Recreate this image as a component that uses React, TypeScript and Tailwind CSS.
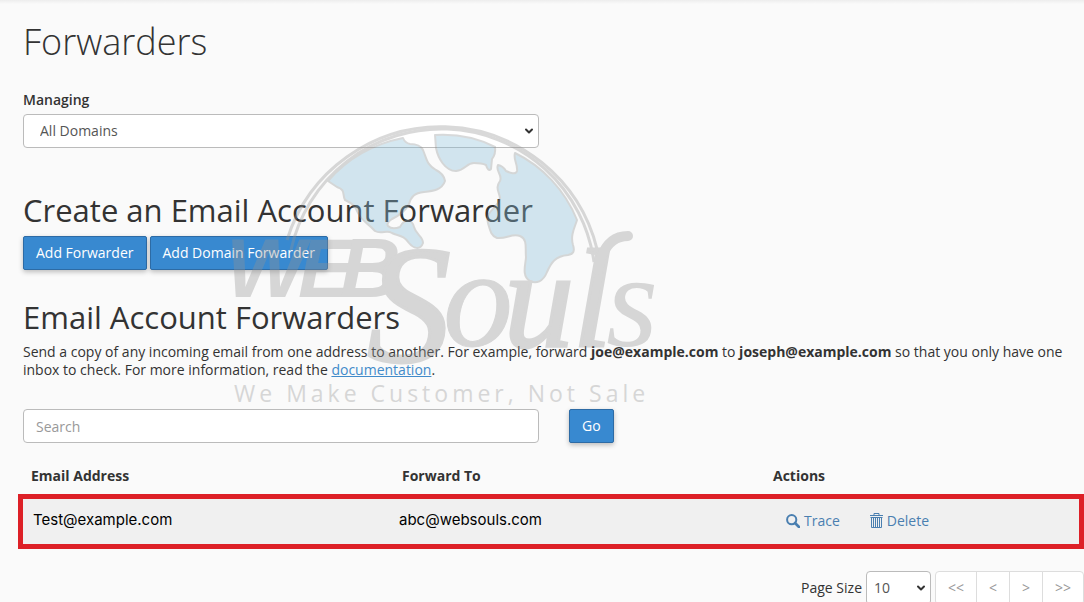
import { ChevronDown } from "lucide-react";

const forwarders = [{ email: "Test@example.com", forwardTo: "abc@websouls.com" }];

const pages = [
  { label: "<<", title: "First page", width: "w-[42px]" },
  { label: "<", title: "Previous page", width: "w-[34px]" },
  { label: ">", title: "Next page", width: "w-[34px]" },
  { label: ">>", title: "Last page", width: "w-[42px]" },
];

const primaryButton =
  "h-[34px] rounded-xs border border-[#2d6ba5] bg-[#3889d0] px-3 text-sm text-white shadow-[0_2px_5px_rgba(0,0,0,0.25)] hover:bg-[#2f79ba]";

function SearchIcon() {
  return (
    <svg viewBox="0 0 14 14" className="h-3.5 w-3.5" fill="none" stroke="currentColor">
      <circle cx="5.7" cy="5.7" r="4.6" strokeWidth="2" />
      <path d="M9 9l4 4" strokeWidth="2.6" strokeLinecap="round" />
    </svg>
  );
}

function TrashIcon() {
  return (
    <svg viewBox="0 0 13 15" className="h-[15px] w-[13px]" fill="none" stroke="currentColor">
      <path d="M0 2.5h13M4 2.5v-2h5v2M0.5 4.5h12" />
      <path d="M1.5 5v9.5h10V5M3.5 5v9M5.5 5v9M7.5 5v9M9.5 5v9" />
    </svg>
  );
}

function Watermark() {
  return (
    <svg
      viewBox="200 100 480 320"
      className="pointer-events-none absolute left-[200px] top-[100px] h-[320px] w-[480px] opacity-35"
      aria-hidden="true"
    >
      <g fill="none" stroke="#949494" strokeWidth="3">
        <path d="M287 240A161 161 0 0 1 597 249" />
        <path d="M291 250A154 154 0 0 1 594 262" />
      </g>
      <g fill="#88bed8" stroke="#8f9496" strokeWidth="2" strokeLinejoin="round">
        <path d="M328 181C347 159 373 144 403 138Q405 143 410 144Q420 144 423 150C427 160 427 165 436 170Q444 174 445 181C442 190 433 191 424 192C414 193 411 197 409 204C405 212 398 216 392 219Q386 223 388 226Q392 230 400 227C405 218 412 219 414 227C416 235 423 236 423 243C420 251 413 248 409 243C404 235 398 236 392 233C386 229 382 235 375 231C367 222 361 221 357 211C355 204 349 202 345 200C342 194 346 190 337 187Z" />
        <path d="M435 135Q468 133 495 147Q496 154 492 159L491 169Q488 172 486 165Q482 163 474 163C466 163 466 170 456 171C445 171 438 158 436 148Z" />
        <path d="M515 153C542 166 565 190 577 220C575 227 570 235 573 245Q576 254 568 255C555 256 551 263 547 272C543 282 536 284 530 281C521 276 526 263 526 257C525 249 528 239 520 236C512 233 507 239 497 238C491 236 490 230 488 223C485 210 498 209 500 198C499 191 495 188 500 181C503 175 495 171 498 165Q503 166 506 171C510 173 516 175 517 171C518 164 513 160 515 153Z" />
      </g>
      <g fill="#949494" fontFamily="'Liberation Sans', sans-serif" fontStyle="italic" fontWeight="700" fontSize="84">
        <text x="226" y="297">W</text>
        <text x="298" y="297">E</text>
        <text x="340" y="297">B</text>
      </g>
      <g fill="#949494" stroke="#949494" strokeWidth="3" fontFamily="'Liberation Serif', serif" fontStyle="italic">
        <text x="367" y="361" fontSize="168">S</text>
        <text x="443" y="346" fontSize="140" strokeWidth="1">o</text>
        <text x="504" y="346" fontSize="140">u</text>
        <text x="573" y="346" fontSize="140">l</text>
        <text x="606" y="346" fontSize="134" strokeWidth="0">s</text>
      </g>
      {/* flourish above the wordmark */}
      <path
        d="M598 270C602 248 612 236 628 236"
        fill="none"
        stroke="#949494"
        strokeWidth="10"
        strokeLinecap="round"
      />
      <text
        x="234"
        y="402"
        fill="#949494"
        fontFamily="'Open Sans', sans-serif"
        fontSize="23"
        fontWeight="500"
        className="tracking-[4px]"
      >
        We Make Customer, Not Sale
      </text>
    </svg>
  );
}

export default function App() {
  return (
    <main className="relative h-screen overflow-hidden bg-[#fafafa] font-['Open_Sans',sans-serif] text-sm text-[#333]">
      <div className="h-1 bg-linear-to-b from-[#ededed] to-[#fafafa]" />

      <div className="pl-[23px]">
        <h1 className="pt-3 text-4xl font-light leading-[52px]">Forwarders</h1>

        {/* Domain picker */}
        <div className="mt-5">
          <label htmlFor="domain" className="block font-semibold leading-6">
            Managing
          </label>
          <div className="relative mt-0.5 max-w-[516px]">
            <select
              id="domain"
              className="h-[34px] w-full appearance-none rounded-sm border border-[#bbb] bg-white px-4 text-[#555]"
            >
              <option>All Domains</option>
            </select>
            <ChevronDown
              className="pointer-events-none absolute right-1 top-[11px] h-3 w-3"
              strokeWidth={4}
            />
          </div>
        </div>

        {/* Create */}
        <h2 className="mt-[42px] text-[31px] leading-10">Create an Email Account Forwarder</h2>
        <div className="mt-1.5 flex gap-[3px]">
          <button className={primaryButton}>Add Forwarder</button>
          <button className={primaryButton}>Add Domain Forwarder</button>
        </div>

        {/* List */}
        <h2 className="mt-[27px] text-[31px] leading-10">Email Account Forwarders</h2>
        <p className="mt-1.5 leading-[18px]">
          Send a copy of any incoming email from one address to another. For example, forward{" "}
          <b>joe@example.com</b> to <b>joseph@example.com</b> so that you only have one inbox to
          check. For more information, read the{" "}
          <a href="#documentation" className="text-[#428bca] underline">
            documentation
          </a>
          .
        </p>

        <form className="mt-[30px] flex gap-[30px]">
          <input
            type="search"
            aria-label="Search"
            placeholder="Search"
            className="h-[34px] w-full max-w-[516px] rounded-sm border border-[#bbb] bg-white px-3 placeholder:text-[#999]"
          />
          <button type="button" className={primaryButton}>
            Go
          </button>
        </form>
      </div>

      <div className="pl-[18px]">
        <table className="mt-4 w-full table-fixed text-left">
          <thead>
            <tr className="h-[35px]">
              <th className="w-[371px] pb-0.5 pl-[13px] font-bold">Email Address</th>
              <th className="w-[371px] pb-0.5 pl-[13px] font-bold">Forward To</th>
              <th className="pb-0.5 pl-[13px] font-bold">Actions</th>
            </tr>
          </thead>
          <tbody>
            {forwarders.map((row) => (
              <tr
                key={row.email}
                className="h-[55px] bg-[#f0f0f0] outline-[5px] -outline-offset-[5px] outline-[#dd2027]"
              >
                <td className="pb-1 pl-[15px] font-[Inter,sans-serif] text-[15px] text-black">
                  {row.email}
                </td>
                <td className="pb-1 pl-2.5 font-[Inter,sans-serif] text-[15px] text-black">
                  {row.forwardTo}
                </td>
                <td className="pb-0.5 pl-[26px] text-[#4a7fb0]">
                  <div className="flex gap-[30px]">
                    <a href="#trace" className="flex items-center gap-1">
                      <SearchIcon />
                      Trace
                    </a>
                    <a href="#delete" className="flex items-center gap-1">
                      <TrashIcon />
                      Delete
                    </a>
                  </div>
                </td>
              </tr>
            ))}
          </tbody>
        </table>
      </div>

      {/* Pagination */}
      <div className="mt-[22px] flex justify-end">
        <label htmlFor="page-size" className="mr-1 leading-[34px]">
          Page Size
        </label>
        <div className="relative mr-1 w-[65px]">
          <select
            id="page-size"
            className="h-[34px] w-full appearance-none rounded-sm border border-[#bbb] bg-white px-[7px] text-[#555]"
          >
            <option>10</option>
          </select>
          <ChevronDown
            className="pointer-events-none absolute right-1 top-[11px] h-3 w-3"
            strokeWidth={4}
          />
        </div>
        <nav className="flex -space-x-px" aria-label="Pages">
          {pages.map((page) => (
            <button
              key={page.label}
              title={page.title}
              className={`${page.width} h-[34px] border border-[#ddd] bg-white text-[#999] first:rounded-l-sm last:rounded-r-sm`}
            >
              {page.label}
            </button>
          ))}
        </nav>
      </div>

      <Watermark />
    </main>
  );
}
